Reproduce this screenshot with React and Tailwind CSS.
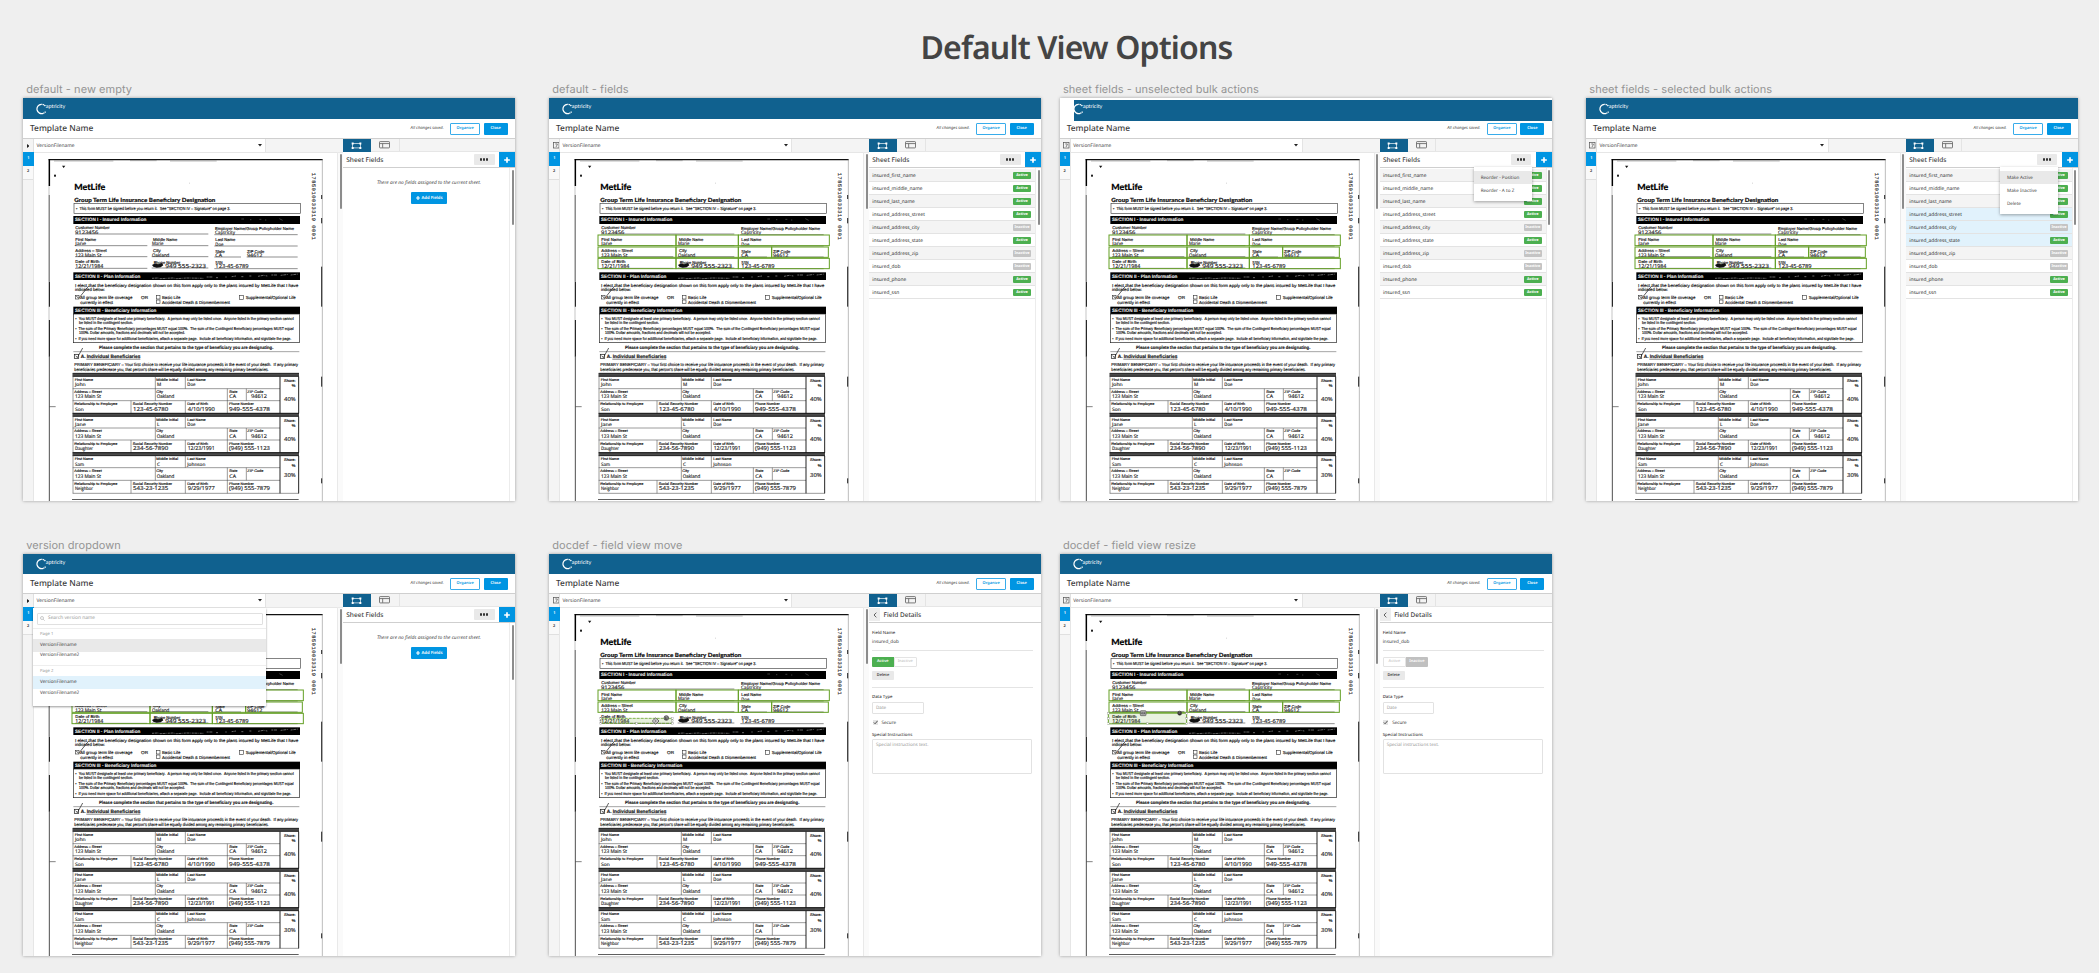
import React from "react";

/* ---------- scanned insurance form ---------- */

const SANS = '"Liberation Sans", Arial, sans-serif';
const HAND = '"Open Sans", "Noto Sans", sans-serif';
const LATO = 'Lato, sans-serif';

function W({ x, y, w, s = 12.5, b = 500, f = SANS, fill = "#161616", sw = 0.5, children }) {
  return (
    <text x={x} y={y} textLength={w} lengthAdjust="spacingAndGlyphs" fontSize={s} fontWeight={b} fontFamily={f} fill={fill}
      stroke={fill} strokeWidth={sw}>
      {children}
    </text>
  );
}

function H(props) {
  return <W s={15} f={HAND} fill="#262626" sw={0.45} {...props} />;
}

function Line({ d, w = 1.6, c = "#333" }) {
  return <path d={d} stroke={c} strokeWidth={w} fill="none" />;
}

const people = [
  { top: 680, rows: [716, 752, 790], first: "John", mi: "M", last: "Doe", zip: "94612", rel: "Son", relW: 26, ssn: "123-45-6780", dob: "4/10/1990", phone: "949-555-4378", share: "40%", lab: [694, 729, 764], val: [709, 745, 783], sy: [695, 712, 753] },
  { top: 800, rows: [834, 870, 908], first: "Jane", mi: "L", last: "Doe", zip: "94612", rel: "Daughter", relW: 54, ssn: "234-56-7890", dob: "12/23/1991", phone: "(949) 555-1123", share: "40%", lab: [813, 846, 884], val: [828, 864, 901], sy: [817, 831, 874] },
  { top: 918, rows: [953, 991, 1030], first: "Sam", mi: "C", last: "Johnson", zip: "", rel: "Neighbor", relW: 54, ssn: "543-23-1235", dob: "9/29/1977", phone: "(949) 555-7879", share: "30%", lab: [931, 967, 1005], val: [948, 984, 1021], sy: [934, 951, 982] },
];

function Person({ p }) {
  const [r1, r2, r3] = p.rows;
  const [l1, l2, l3] = p.lab;
  const [v1, v2, v3] = p.val;
  return (
    <g>
      <rect x="128" y={p.top - 10} width="679" height="9" fill="#4a4a4a" />
      <Line d={`M128 ${p.top - 10}H807M128 ${p.top - 1}H807`} w={2.4} c="#000" />
      <Line d={`M128 ${r1}H750M128 ${r2}H750M128 ${r3}H807M129 ${p.top - 10}V${r3}M376 ${p.top}V${r2}M466 ${p.top}V${r1}M592 ${r1}V${r3}M649 ${r1}V${r2}M303 ${r2}V${r3}M466 ${r2}V${r3}`} c="#444" />
      <Line d={`M750 ${p.top}V${r3}M806 ${p.top}V${r3}`} w={2.6} c="#000" />
      <W x={134} y={l1} w={55} s={11}>First Name</W>
      <W x={379} y={l1} w={65} s={11}>Middle Initial</W>
      <W x={472} y={l1} w={55} s={11}>Last Name</W>
      <H x={135} y={v1} w={p.first === "Sam" ? 27 : 32} s={14}>{p.first}</H>
      <H x={381} y={v1} s={14}>{p.mi}</H>
      <H x={472} y={v1} w={p.last === "Doe" ? 24 : 54} s={14}>{p.last}</H>
      <W x={133} y={l2} w={82} s={11}>Address – Street</W>
      <W x={379} y={l2} w={20} s={11}>City</W>
      <W x={598} y={l2} w={24} s={11}>State</W>
      <W x={652} y={l2} w={48} s={11}>ZIP Code</W>
      <H x={135} y={v2} w={78} s={15}>123 Main St</H>
      <H x={380} y={v2} w={53} s={15}>Oakland</H>
      <H x={598} y={v2} w={20} s={15}>CA</H>
      {p.zip && <H x={663} y={v2} w={48} s={16}>{p.zip}</H>}
      <W x={133} y={l3} w={129} s={11}>Relationship to Employee</W>
      <W x={308} y={l3} w={118} s={11}>Social Security Number</W>
      <W x={472} y={l3} w={62} s={11}>Date of Birth</W>
      <W x={597} y={l3} w={74} s={11}>Phone Number</W>
      <H x={135} y={v3} w={p.relW} s={14}>{p.rel}</H>
      <H x={309} y={v3} w={106} s={16.5}>{p.ssn}</H>
      <H x={473} y={v3} w={81} s={16.5}>{p.dob}</H>
      <H x={597} y={v3} w={123} s={16.5}>{p.phone}</H>
      <W x={762} y={p.sy[0]} w={35} s={11.5}>Share:</W>
      <W x={785} y={p.sy[1]} w={11} s={13}>%</W>
      <H x={762} y={p.sy[2]} w={35} s={16.5}>{p.share}</H>
    </g>
  );
}

function Zone({ x1, x2, y1, y2 }) {
  return <rect x={x1} y={y1} width={x2 - x1} height={y2 - y1} fill="none" stroke="#64a024" strokeWidth="3" />;
}

function Zones({ birthRow }) {
  return (
    <g>
      <Zone x1={126} x2={360} y1={255} y2={287} />
      <Zone x1={360} x2={547} y1={255} y2={287} />
      <Zone x1={547} x2={820} y1={255} y2={287} />
      <Zone x1={126} x2={360} y1={291} y2={322} />
      <Zone x1={360} x2={547} y1={291} y2={322} />
      <Zone x1={547} x2={647} y1={291} y2={322} />
      <Zone x1={647} x2={817} y1={291} y2={322} />
      {birthRow && (
        <g>
          <Zone x1={126} x2={360} y1={325} y2={356} />
          <Zone x1={360} x2={547} y1={325} y2={356} />
          <Zone x1={547} x2={820} y1={325} y2={356} />
        </g>
      )}
    </g>
  );
}

function Handles({ x1, x2, y1, y2 }) {
  const pts = [[x1, y1], [x2, y1], [x1, y2], [x2, y2], [(x1 + x2) / 2, y2], [x1, (y1 + y2) / 2], [x2, (y1 + y2) / 2]];
  return pts.map(([x, y]) => (
    <rect key={x + "-" + y} x={x - 2.5} y={y - 2.5} width="5" height="5" fill="#fff" stroke="#8a8a8a" strokeWidth="1" />
  ));
}

function MoveField() {
  return (
    <g>
      <rect x="134" y="340" width="215" height="15" fill="#64a024" fillOpacity="0.16" stroke="#64a024" strokeWidth="2.4" strokeDasharray="9 3" />
      <Handles x1={134} x2={349} y1={340} y2={355} />
      <path d="M299 339L309 348L299 357L289 348Z" fill="#eee" stroke="#444" strokeWidth="2.5" />
      <path d="M294 348H304M299 343V353" stroke="#444" strokeWidth="1.5" />
      <circle cx="331" cy="339" r="7" fill="#aaa" stroke="#333" strokeWidth="2" />
      <path d="M328 335V343H333V335" stroke="#222" strokeWidth="2" fill="none" />
    </g>
  );
}

function ResizeField() {
  return (
    <g>
      <rect x="124" y="324.5" width="235" height="32" fill="#64a024" fillOpacity="0.14" stroke="#64a024" strokeWidth="3" />
      <Handles x1={124} x2={359} y1={325} y2={356} />
      <rect x="220" y="317" width="17" height="15" rx="2" fill="#aaa" stroke="#555" strokeWidth="2" />
      <path d="M224 324.500H233M226 321.500L223.500 324.500L226 327.500M231 321.500L233.500 324.500L231 327.500" stroke="#333" strokeWidth="1.6" fill="none" />
      <circle cx="338" cy="324.500" r="6" fill="#777" stroke="#333" strokeWidth="2" />
      <path d="M335.500 321.500V328.500H340V321.500" stroke="#111" strokeWidth="2" fill="none" />
    </g>
  );
}

function Scan({ overlay }) {
  return (
    <svg className="block h-[348px] w-[303px] bg-white" viewBox="12 9 909 1044">
      {/* page edges */}
      <Line d="M56 29H878" w={4} c="#111" />
      <Line d="M72 33H250M300 32H380M420 33H560" w={1.5} c="#777" />
      <Line d="M58 27V108" w={4.5} c="#000" />
      <Line d="M57 108V135M57 470V510" w={1.5} c="#888" />
      <Line d="M57.500 135V395M58 620V1053" w={2.6} c="#333" />
      <Line d="M58 395V470M58 510V620" w={3.4} c="#111" />
      <Line d="M877 27V1053" w={1.5} c="#777" />
      <Line d="M875 135V147M875 204V220M875 350V470M875 680V710M875 985V1000" w={3} c="#222" />
      <Line d="M58 770H77" w={2} c="#444" />
      <path d="M96 47H106L101 54Z" fill="#111" />
      <rect x="72" y="74" width="6" height="6" fill="#222" />
      <rect x="477" y="98" width="2" height="3" fill="#bbb" />
      <text transform="translate(847 68) rotate(90)" textLength="201" fontSize="16" fontFamily='"Liberation Mono", monospace' fill="#222" stroke="#222" strokeWidth="0.4">1785010033319 0001</text>

      <W x={133} y={121} w={93} s={26} b={900} f={LATO} fill="#000">MetLife</W>
      <W x={133} y={154.5} w={423} s={17} b={900} f={LATO} fill="#111">Group Term Life Insurance Beneficiary Designation</W>
      <rect x="132" y="160" width="679" height="30" fill="none" stroke="#333" strokeWidth="1.8" />
      <W x={138} y={178.5} w={463} s={13}>{'• \u00a0This form MUST be signed before you return it. \u00a0See "SECTION IV – Signature" on page 3.'}</W>

      <rect x="130" y="198" width="680" height="24" fill="#000" />
      <W x={135} y={214} w={214} s={14.5} b={700} fill="#f4f4f4" sw={0.2}>SECTION I - Insured Information</W>
      <Line d="M634 207H642M660 209H664M688 208H694M705 210H709M748 206L758 211" w={1.5} c="#777" />

      <Line d="M135 252H535M553 254H803M135 287H352M365 287H535M553 288H803M135 320H352M365 320H535M553 321H633M650 321H803M135 355H352M365 354H535M553 356H803" w={1.8} c="#444" />
      <W x={136} y={236} w={103}>Customer Number</W>
      <H x={135} y={251} w={70}>9123456</H>
      <W x={555} y={240} w={237}>Employer Name/Group Policyholder Name</W>
      <H x={555} y={253} w={60} s={14}>Captricity</H>
      <W x={136} y={272} w={62}>First Name</W>
      <H x={136} y={286} w={32} s={14}>Jane</H>
      <W x={369} y={272.5} w={73}>Middle Name</W>
      <H x={366} y={286} w={34} s={14}>Marie</H>
      <W x={556} y={273} w={60}>Last Name</W>
      <H x={556} y={287} w={24} s={14}>Doe</H>
      <W x={136} y={306} w={94}>Address – Street</W>
      <H x={136} y={320} w={78} s={15}>123 Main St</H>
      <W x={369} y={307} w={23}>City</W>
      <H x={366} y={320} w={52} s={15}>Oakland</H>
      <W x={556} y={308} w={28}>State</W>
      <H x={556} y={321} w={20}>CA</H>
      <W x={651} y={308} w={52}>ZIP Code</W>
      <H x={651} y={321} w={46}>94612</H>
      <W x={136} y={340} w={72}>Date of Birth</W>
      <H x={136} y={355} w={84} s={16.5}>12/21/1984</H>
      <W x={371} y={341} w={80}>Phone Number</W>
      <path d="M366 345L376 340L384 343L396 339L400 346L392 352L380 353L370 350Z" fill="#111" />
      <H x={406} y={354} w={122} s={17}>949 555-2323</H>
      <W x={556} y={341} w={22}>SSN</W>
      <H x={556} y={355} w={100} s={16.5}>123-45-6789</H>

      <rect x="130" y="367" width="680" height="23" fill="#000" />
      <W x={135} y={383.5} w={196} s={14.5} b={700} fill="#f4f4f4" sw={0.2}>SECTION II - Plan Information</W>
      <path d="M366 385L384 384L390 386L428 384L440 386L470 384L520 385M530 381H550M558 383H564M588 379V383M605 380L618 378M634 380H640M658 378H664M684 379L700 376L712 378M724 375H742M752 376L776 373M782 375L806 372" stroke="#9a9a9a" strokeWidth="2" strokeDasharray="6 2 9 3 2 2" fill="none" />
      <W x={135} y={409.5} w={670} s={13}>I elect that the beneficiary designation shown on this form apply only to the plans insured by MetLife that I have</W>
      <W x={135} y={423} w={90} s={13}>indicated below:</W>
      <g fill="none" stroke="#333" strokeWidth="1.8">
        <rect x="136" y="436" width="11" height="11" />
        <rect x="379" y="436" width="11" height="11" />
        <rect x="379" y="450" width="11" height="11" />
        <rect x="629" y="437" width="11" height="11" />
        <path d="M139 438L146 445L176 408" strokeWidth="2.4" />
      </g>
      <W x={150} y={447} w={157} s={13}>All group term life coverage</W>
      <W x={151} y={460.5} w={98} s={13}>currently in effect</W>
      <W x={333} y={446.5} w={21} s={13}>OR</W>
      <W x={396} y={447} w={55} s={13}>Basic Life</W>
      <W x={396} y={460.5} w={204} s={13}>{"Accidental Death & Dismemberment"}</W>
      <W x={647} y={448} w={150} s={13}>Supplemental/Optional Life</W>

      <rect x="130" y="470" width="680" height="22" fill="#000" />
      <W x={135} y={486} w={244} s={14.5} b={700} fill="#f4f4f4" sw={0.2}>SECTION III - Beneficiary Information</W>
      <rect x="130.500" y="492" width="678" height="86" fill="none" stroke="#222" strokeWidth="2" />
      <W x={136} y={510} w={655}>• &nbsp;You MUST designate at least one primary beneficiary. &nbsp;A person may only be listed once. &nbsp;Anyone listed in the primary section cannot</W>
      <W x={147} y={523} w={162}>be listed in the contingent section.</W>
      <W x={136} y={539.5} w={655}>• &nbsp;The sum of the Primary Beneficiary percentages MUST equal 100%. &nbsp;The sum of the Contingent Beneficiary percentages MUST equal</W>
      <W x={147} y={552} w={318}>100%. Dollar amounts, fractions and decimals will not be accepted.</W>
      <W x={136} y={571} w={648}>• &nbsp;If you need more space for additional beneficiaries, attach a separate page. &nbsp;Include all beneficiary information, and sign/date the page.</W>
      <W x={207} y={595.5} w={523} s={14} b={700} sw={0.4}>Please complete the section that pertains to the type of beneficiary you are designating.</W>
      <Line d="M130 605H808" c="#555" />
      <g fill="none" stroke="#222" strokeWidth="2.2">
        <rect x="133" y="613" width="13" height="12" />
        <path d="M137 617L142 623L158 594" />
      </g>
      <W x={152} y={624.5} w={179} s={14.5} b={700}>A. Individual Beneficiaries</W>
      <Line d="M169 627.500H331" c="#111" />
      <W x={133} y={647} w={671} s={13}>PRIMARY BENEFICIARY – Your first choice to receive your life insurance proceeds in the event of your death. &nbsp;If any primary</W>
      <W x={133} y={661.5} w={583} s={13}>beneficiaries predecease you, that person's share will be equally divided among any remaining primary beneficiaries.</W>

      {people.map((p) => <Person key={p.first} p={p} />)}
      <Line d="M126 1048.500H806" w={2.6} c="#444" />

      {overlay === "all" && <Zones birthRow />}
      {overlay === "move" && <g><Zones /><MoveField /></g>}
      {overlay === "resize" && <g><Zones /><ResizeField /></g>}
    </svg>
  );
}

/* ---------- icons ---------- */

function Logo() {
  return (
    <div className="flex items-center pl-[13.3px] text-white">
      <svg className="h-[12px] w-[11px]" viewBox="0 0 33 36" fill="none" stroke="#fff">
        <path d="M28 9A14 14 0 0 0 16 4" strokeWidth="4" strokeDasharray="4 1.500" />
        <path d="M16 4A14 14 0 1 0 22 31" strokeWidth="3.600" />
        <path d="M22 31A14 14 0 0 0 29 25" strokeWidth="4" strokeDasharray="3.500 1.500" />
      </svg>
      <span className="-ml-[1.5px] -mt-[1px] font-[Lato,sans-serif] text-[5.4px] leading-none">aptricity</span>
    </div>
  );
}

function FieldsIcon() {
  return (
    <svg className="h-[7.5px] w-[11px]" viewBox="0 0 33 22" fill="none" stroke="#fff">
      <rect x="5" y="4.500" width="23" height="13" strokeWidth="2" />
      <path d="M2 1.500h6v6H2zM25 1.500h6v6h-6zM2 14.500h6v6H2zM25 14.500h6v6h-6z" fill="#fff" stroke="none" />
    </svg>
  );
}

function LayoutIcon() {
  return (
    <svg className="h-[7.5px] w-[11px]" viewBox="0 0 33 22" fill="none" stroke="#666" strokeWidth="2.600">
      <rect x="1.500" y="1.500" width="30" height="19" rx="2" />
      <path d="M2 7.500H31M11 7.500V20" />
    </svg>
  );
}

function Plus({ className }) {
  return (
    <svg className={className} viewBox="0 0 18 18">
      <path d="M9 0.500V17.500M0.500 9H17.500" stroke="#fff" strokeWidth="5" />
    </svg>
  );
}

/* ---------- panels ---------- */

const fields = [
  ["insured_first_name", true],
  ["insured_middle_name", true],
  ["insured_last_name", true],
  ["insured_address_street", true],
  ["insured_address_city", false],
  ["insured_address_state", true],
  ["insured_address_zip", false],
  ["insured_dob", false],
  ["insured_phone", true],
  ["insured_ssn", true],
];

function FieldRow({ name, active, shade }) {
  return (
    <div className={`flex h-[13px] items-start justify-between border-b border-[#e3e3e3] pl-[3.3px] pr-[4px] pt-[3px] ${shade}`}>
      <span className="text-[4.85px] leading-[8px] text-[#333]">{name}</span>
      <span className={`flex h-[7px] w-[18px] items-center justify-center rounded-[1px] text-[3.7px] font-bold leading-none text-white ${active ? "bg-[#4caf50]" : "bg-[#c4c4c4]"}`}>
        {active ? "Active" : "Inactive"}
      </span>
    </div>
  );
}

function Menu({ items }) {
  return (
    <div className="absolute right-[20px] top-[15px] flex w-[58px] flex-col bg-white pb-[3px] pt-[4px] shadow-[0_1px_3px_rgba(0,0,0,0.35)]">
      {items.map((t, i) => (
        <div key={t} className={`flex h-[13.3px] items-center pl-[7px] pt-[1px] text-[4.6px] leading-none text-[#444] ${i === 0 ? "bg-[#e9e9e9]" : ""}`}>{t}</div>
      ))}
    </div>
  );
}

function SheetFields({ empty, selected, menu }) {
  return (
    <div className="relative flex flex-1 flex-col">
      <div className="flex h-[16px] items-stretch justify-between border-b border-[#cfcfcf] pl-[3.3px]">
        <span className="flex items-center pt-[1.5px] text-[6.5px] font-medium leading-none text-[#3c3c3c]">Sheet Fields</span>
        <div className="flex gap-[4.5px]">
          <div className="mt-[2px] flex h-[11px] w-[20.5px] items-center justify-center gap-[0.7px] rounded-[1px] bg-[#e9e9e9]">
            <i className="size-[2.3px] rounded-full bg-[#333]" />
            <i className="size-[2.3px] rounded-full bg-[#333]" />
            <i className="size-[2.3px] rounded-full bg-[#333]" />
          </div>
          <div className="flex w-[16px] items-center justify-center bg-[#0095e2]">
            <Plus className="size-[6px]" />
          </div>
        </div>
      </div>
      <div className="flex flex-1">
        <div className={`flex w-[167px] flex-col border-r border-[#ececec] ${empty ? "" : "pt-[1px]"}`}>
          {empty ? (
            <div className="flex flex-col items-center pl-[6px] pt-[12px]">
              <span className="text-[4.85px] italic leading-[6px] text-[#444]">There are no fields assigned to the current sheet.</span>
              <div className="mt-[5.5px] flex h-[12px] w-[36px] items-center justify-center gap-[2px] rounded-[1px] bg-[#0095e2] text-[4.2px] font-semibold leading-[5px] text-white">
                <Plus className="size-[4px]" /><span className="pt-[1px]">Add Fields</span>
              </div>
            </div>
          ) : (
            fields.map(([name, active], i) => (
              <FieldRow key={name} name={name} active={active}
                shade={selected && i >= 3 && i <= 5 ? "bg-[#e1f2fc]" : i % 2 === 0 && i < 9 ? "bg-[#f4f4f4]" : "bg-white"} />
            ))
          )}
        </div>
        <div className="ml-[1.5px] mt-[2px] h-[55px] w-[2px] rounded-full bg-[#8c8c8c]" />
      </div>
      {menu && <Menu items={menu} />}
    </div>
  );
}

function FieldDetails({ active }) {
  return (
    <div className="flex flex-1 flex-col text-[#3c3c3c]">
      <div className="flex h-[16px] items-stretch border-b border-[#cfcfcf]">
        <div className="my-[1px] flex w-[11px] items-center justify-center bg-[#ededed]">
          <svg className="h-[6px] w-[4px]" viewBox="0 0 12 18" fill="none" stroke="#444" strokeWidth="2.500"><path d="M10 2L3 9L10 16" /></svg>
        </div>
        <span className="flex items-center pl-[3.5px] pt-[1.5px] text-[6.5px] font-medium leading-none">Field Details</span>
      </div>
      <div className="flex w-[164px] flex-col pl-[3px] text-[4.6px] leading-[6px]">
        <span className="mt-[7px] text-[4.3px] font-medium">Field Name</span>
        <span className="mt-[2.5px]">insured_dob</span>
        <div className="mt-[5.5px] border-t border-[#e4e4e4]" />
        <div className="mt-[6px] flex h-[10px] w-[45px] text-[3.9px] font-semibold leading-none">
          <div className={`flex flex-1 items-center justify-center rounded-l-[1px] ${active ? "bg-[#4caf50] text-white" : "border border-[#e4e4e4] text-[#ccc]"}`}>Active</div>
          <div className={`flex flex-1 items-center justify-center rounded-r-[1px] ${active ? "border border-[#e4e4e4] text-[#ccc]" : "bg-[#c0c0c0] text-white"}`}>Inactive</div>
        </div>
        <div className="mt-[4px] flex h-[9px] w-[22px] items-center justify-center rounded-[1px] bg-[#e9e9e9] text-[3.9px] font-semibold leading-none">Delete</div>
        <div className="mt-[6.5px] border-t border-[#e4e4e4]" />
        <span className="mt-[6.5px] text-[4.3px] font-medium">Data Type</span>
        <div className="mt-[1.5px] flex h-[12px] w-[51.5px] items-center rounded-[1px] border border-[#e2e2e2] pl-[3px] text-[#999]">Date</div>
        <div className="mt-[6px] flex items-center gap-[4px]">
          <div className="ml-[0.5px] flex size-[5px] items-center justify-center bg-[#e4e4e4]">
            <svg className="size-[5px]" viewBox="0 0 12 12" fill="none" stroke="#333" strokeWidth="2"><path d="M2 6L5 9L11 2" /></svg>
          </div>
          <span>Secure</span>
        </div>
        <span className="mt-[6px] text-[4.3px] font-medium">Special Instructions</span>
        <div className="mt-[1.5px] h-[34.5px] w-[160px] rounded-[1px] border border-[#e2e2e2] pl-[3px] pt-[1.5px] text-[#999]">Special instructions text.</div>
      </div>
    </div>
  );
}

function VersionDropdown() {
  const item = "flex h-[13px] items-center pl-[7px]";
  return (
    <div className="absolute left-[10px] top-[14px] z-10 flex h-[97.5px] w-[233px] flex-col bg-white text-[4.7px] leading-none text-[#444] shadow-[0_1px_2px_rgba(0,0,0,0.4)]">
      <div className="mx-[3.5px] mt-[4.5px] flex h-[12px] items-center gap-[3px] rounded-[1px] border border-[#e0e0e0] pl-[2.5px] text-[4.8px] text-[#999]">
        <svg className="size-[5px]" viewBox="0 0 15 15" fill="none" stroke="#999" strokeWidth="1.500"><circle cx="6" cy="6" r="4.500" /><path d="M9.500 9.500L14 14" /></svg>
        Search version name
      </div>
      <div className="mt-[3px] border-t border-[#eee]" />
      <div className="mt-[3px] flex h-[7px] items-center pl-[7px] text-[4.2px] text-[#999]">Page 1</div>
      <div className={`${item} bg-[#e9e9e9]`}>VersionFilename</div>
      <div className="flex h-[8.5px] items-center pl-[7px]">VersionFilename2</div>
      <div className="mt-[5px] border-t border-[#eee]" />
      <div className="mt-[3px] flex h-[7px] items-center pl-[7px] text-[4.2px] text-[#999]">Page 2</div>
      <div className={`${item} bg-[#e1f2fc]`}>VersionFilename</div>
      <div className="flex h-[8.5px] items-center pl-[7px]">VersionFilename2</div>
    </div>
  );
}

/* ---------- artboard ---------- */

function Board({ title, overlay, panel, arrow, low, offset, dropdown }) {
  const headerClass = offset ? "ml-[14px] mt-[2px] h-[21px]" : low ? "h-[20px]" : "h-[21px]";
  return (
    <section className="flex w-[492px] flex-col">
      <h2 className="h-[18px] whitespace-pre pl-[3.3px] pt-[1px] font-[Inter,sans-serif] text-[11px] leading-[16px] tracking-[0.04px] text-[#949494]">{title}</h2>
      <div className={`flex flex-col overflow-hidden bg-white ${low ? "h-[402px]" : "h-[403px]"} shadow-[0_0_3px_rgba(0,0,0,0.35)]`}>
        <header className={`flex shrink-0 items-center bg-[#10618f] ${headerClass}`}>
          <div className={offset ? "-ml-[13.5px] -mt-[4px]" : ""}><Logo /></div>
        </header>
        <div className={`flex shrink-0 items-center justify-between border-b border-[#cfcfcf] pl-[7px] pr-[7.3px] ${offset ? "h-[18px] pb-[1px]" : "h-[20px]"}`}>
          <span className="pt-[1px] text-[8.4px] font-medium leading-none text-[#3c3c3c]">Template Name</span>
          <div className="flex items-center gap-[3.5px] text-[3.9px] leading-none">
            <span className="mr-[3px] pt-[1px] text-[4.1px] italic text-[#444]">All changes saved.</span>
            <div className="flex h-[12px] w-[30px] items-center justify-center rounded-[1px] border border-[#38aceb] font-semibold text-[#0095e2]">Organize</div>
            <div className="flex h-[12px] w-[24px] items-center justify-center rounded-[1px] bg-[#0095e2] font-semibold text-white">Close</div>
          </div>
        </div>
        <div className="flex flex-1">
          <div className="relative flex w-[320px] flex-col">
            <div className="flex h-[13px] bg-[#f4f4f4]">
              <div className="flex w-[11px] items-center justify-end border-r border-[#e0e0e0]">
                {arrow ? (
                  <svg className="mr-[4px] h-[4px] w-[2.5px]" viewBox="0 0 5 8"><path d="M0 0L5 4L0 8Z" fill="#222" /></svg>
                ) : (
                  <svg className="h-[6.5px] w-[6.5px]" viewBox="0 0 20 20" fill="none" stroke="#555" strokeWidth="2.200">
                    <rect x="1.500" y="1.500" width="17" height="17" /><path d="M7 6H13V10L10 12V15" />
                  </svg>
                )}
              </div>
              <div className="flex w-[232px] items-center justify-between border-r border-[#e4e4e4] bg-white pl-[2.5px] pr-[3.5px]">
                <span className="pt-[1px] text-[4.9px] leading-none text-[#444]">VersionFilename</span>
                <svg className="h-[2.5px] w-[4px]" viewBox="0 0 8 5"><path d="M0 0H8L4 5Z" fill="#222" /></svg>
              </div>
            </div>
            <div className="flex flex-1">
              <div className="flex w-[11px] flex-col border-r border-[#e6e6e6] bg-[#f4f4f4] text-[3.8px] font-bold leading-none">
                <div className="-mr-px flex h-[14px] w-[10.5px] items-center justify-center bg-[#0095e2] text-white">1</div>
                <div className="flex h-[13.5px] items-center justify-center border-b border-[#e0e0e0] bg-[#f9f9f9] text-[#444]">2</div>
              </div>
              <div className="border-t border-[#e6e6e6]"><Scan overlay={overlay} /></div>
              <div className="w-[6px] border-l border-t border-[#e9e9e9] bg-[#fafafa] pl-[1.5px] pt-[1px]">
                <div className="h-[55px] w-[2px] rounded-full bg-[#8c8c8c]" />
              </div>
            </div>
            {dropdown && <VersionDropdown />}
          </div>
          <div className="-ml-px flex w-[173px] flex-col border-l border-[#cfcfcf]">
            <div className="flex h-[13px] border-b border-[#e6e6e6] bg-[#f4f4f4]">
              <div className="-mb-px flex h-[13px] w-[28px] items-center justify-center bg-[#10618f] pr-[2px]"><FieldsIcon /></div>
              <div className="flex w-[28.5px] items-center justify-center border-r border-[#e4e4e4]"><LayoutIcon /></div>
            </div>
            {panel}
          </div>
        </div>
      </div>
    </section>
  );
}

export default function App() {
  return (
    <main className="h-[973px] w-[2099px] overflow-hidden whitespace-nowrap bg-[#efefef] font-['Noto_Sans',sans-serif] [text-rendering:geometricPrecision]">
      <h1 className="flex h-[80px] items-center justify-center pl-[54px] pt-[16px] text-[32px] font-semibold leading-none tracking-[-0.85px] text-[#444]">Default View Options</h1>
      <div className="grid grid-cols-[526px_510.67px_526.33px_492px] pl-[23px]">
        <Board title="default - new empty" arrow panel={<SheetFields empty />} />
        <Board title="default - fields" overlay="all" panel={<SheetFields />} />
        <Board title="sheet fields - unselected bulk actions" overlay="all" offset panel={<SheetFields menu={["Reorder - Position", "Reorder - A to Z"]} />} />
        <Board title="sheet fields - selected bulk actions" overlay="all" panel={<SheetFields selected menu={["Make Active", "Make Inactive", "Delete"]} />} />
      </div>
      <div className="grid grid-cols-[526px_510.67px_526.33px_492px] pl-[23px] pt-[35px]">
        <Board low title="version dropdown" overlay="all" arrow dropdown panel={<SheetFields empty />} />
        <Board low title="docdef - field view move" overlay="move" panel={<FieldDetails active />} />
        <Board low title="docdef - field view resize" overlay="resize" panel={<FieldDetails />} />
      </div>
    </main>
  );
}
